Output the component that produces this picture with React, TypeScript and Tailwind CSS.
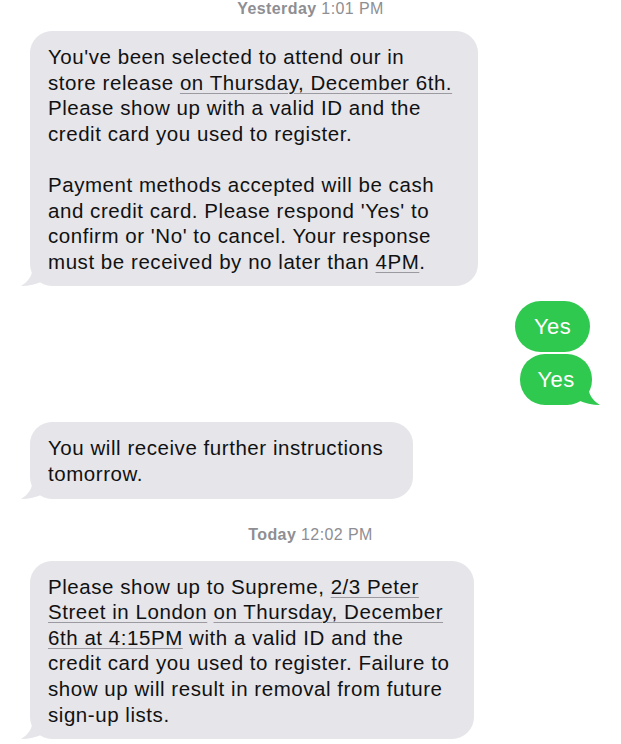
import type { ReactNode } from "react";

const font = { fontFamily: '"Liberation Sans", Arial, sans-serif' };

const TailLeft = ({ color }: { color: string }) => (
  <svg
    className="absolute -left-[9px] bottom-0"
    width="22"
    height="20"
    viewBox="0 0 22 20"
  >
    <path d="M12 0 C12 9 7 16 0 20 C8 20 15 18.5 22 15 L22 0 Z" fill={color} />
  </svg>
);

const TailRight = ({ color }: { color: string }) => (
  <svg
    className="absolute -right-[8px] bottom-0"
    width="22"
    height="20"
    viewBox="0 0 22 20"
  >
    <path d="M10 0 C10 9 15 16 22 20 C14 20 7 18.5 0 15 L0 0 Z" fill={color} />
  </svg>
);

const Stamp = ({ day, time }: { day: string; time: string }) => (
  <div className="text-center text-[16px] leading-[18px] tracking-[0.4px] text-[#8e8e93]">
    <span className="font-bold">{day}</span> {time}
  </div>
);

const Gray = ({ width, children }: { width: string; children: ReactNode }) => (
  <div className={`relative ml-[30px] ${width}`}>
    <div className="rounded-[22px] bg-[#e5e5ea] pl-[18px] pr-[8px] pt-[13px] pb-[12px] text-[20.5px] leading-[25.6px] tracking-[0.55px] text-[#111]">
      {children}
    </div>
    <TailLeft color="#e5e5ea" />
  </div>
);

const U = ({ children }: { children: ReactNode }) => (
  <span className="underline decoration-[#9a9aa0] decoration-1 underline-offset-[3px]">
    {children}
  </span>
);

export default function App() {
  return (
    <div className="w-[621px] h-[744px] overflow-hidden bg-white" style={font}>
      <Stamp day="Yesterday" time="1:01 PM" />

      <div className="mt-[13px]">
        <Gray width="w-[448px]">
          You've been selected to attend our in
          <br />
          store release <U>on Thursday, December 6th.</U>
          <br />
          Please show up with a valid ID and the
          <br />
          credit card you used to register.
          <br />
          <br />
          Payment methods accepted will be cash
          <br />
          and credit card. Please respond 'Yes' to
          <br />
          confirm or 'No' to cancel. Your response
          <br />
          must be received by no later than <U>4PM</U>.
        </Gray>
      </div>

      <div className="mt-[15px] flex flex-col items-end">
        <div className="mr-[31px] flex h-[51px] w-[75px] items-center justify-center rounded-full bg-[#30c94f] text-[22px] tracking-[0.4px] text-white">
          Yes
        </div>
        <div className="relative mr-[29px] mt-[2px] w-[72px]">
          <div className="flex h-[51px] items-center justify-center rounded-[25px] bg-[#30c94f] text-[22px] tracking-[0.4px] text-white">
            Yes
          </div>
          <TailRight color="#30c94f" />
        </div>
      </div>

      <div className="mt-[17px]">
        <Gray width="w-[383px]">
          You will receive further instructions
          <br />
          tomorrow.
        </Gray>
      </div>

      <div className="mt-[27px]">
        <Stamp day="Today" time="12:02 PM" />
      </div>

      <div className="mt-[17px]">
        <Gray width="w-[444px]">
          Please show up to Supreme, <U>2/3 Peter</U>
          <br />
          <U>Street in London</U> <U>on Thursday, December</U>
          <br />
          <U>6th at 4:15PM</U> with a valid ID and the
          <br />
          credit card you used to register. Failure to
          <br />
          show up will result in removal from future
          <br />
          sign-up lists.
        </Gray>
      </div>
    </div>
  );
}
